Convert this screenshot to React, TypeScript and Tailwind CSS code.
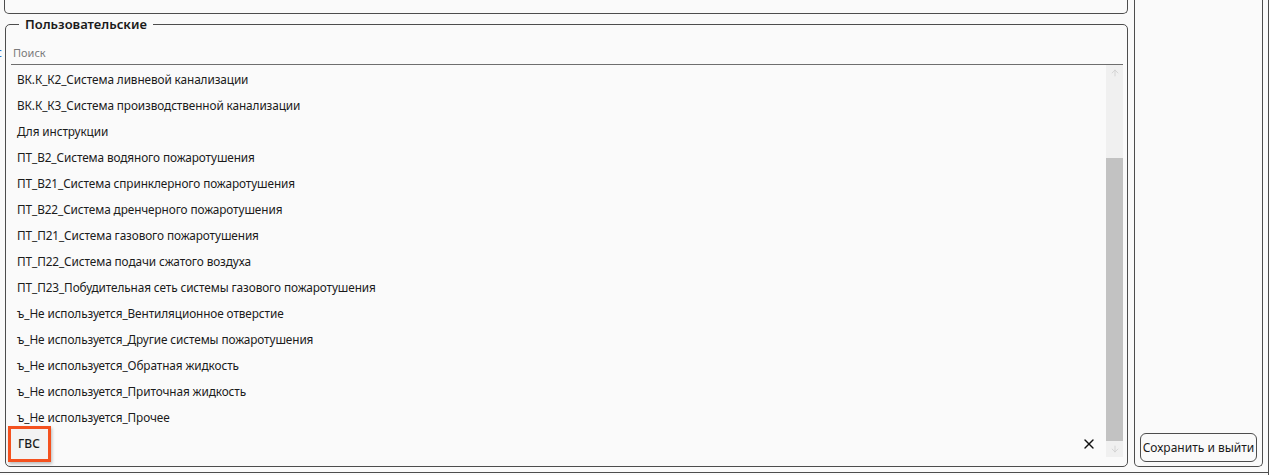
import React from 'react';
import { X, ArrowUp, ArrowDown } from 'lucide-react';

const items = [
  'ВК.К_К2_Система ливневой канализации',
  'ВК.К_К3_Система производственной канализации',
  'Для инструкции',
  'ПТ_В2_Система водяного пожаротушения',
  'ПТ_В21_Система спринклерного пожаротушения',
  'ПТ_В22_Система дренчерного пожаротушения',
  'ПТ_П21_Система газового пожаротушения',
  'ПТ_П22_Система подачи сжатого воздуха',
  'ПТ_П23_Побудительная сеть системы газового пожаротушения',
  'ъ_Не используется_Вентиляционное отверстие',
  'ъ_Не используется_Другие системы пожаротушения',
  'ъ_Не используется_Обратная жидкость',
  'ъ_Не используется_Приточная жидкость',
  'ъ_Не используется_Прочее',
];

const App = () => {
  return (
    <div className="relative flex h-[475px] w-[1269px] overflow-hidden bg-[#fafafa] text-[#1b1b1b] font-['Noto_Sans','Open_Sans',sans-serif]">
      {/* stray clipped glyph at left edge */}
      <span className="absolute left-[-4px] top-[44px] text-[12px] text-[#2a6fc9]">с</span>

      {/* Left column */}
      <div className="flex w-[1134px] flex-col pl-[4px] pr-[6px]">
        {/* end of previous panel */}
        <div className="h-[14px] shrink-0 rounded-b-[5px] border-x border-b border-[#4d4d4d]" />

        {/* Group box */}
        <fieldset className="mt-[3px] flex h-[450px] flex-col rounded-[5px] border border-[#4d4d4d] pl-[5px] pr-[4px] pb-[2px] ml-[1px]">
          <legend className="ml-[8px] px-[6px] text-[13px] font-semibold leading-[14px] text-[#1b1b1b]">
            Пользовательские
          </legend>

          {/* Search */}
          <div className="mt-[15px] flex h-[19px] items-start border-b border-[#6e6e6e] px-[2px] text-[11px] leading-[14px] text-[#7a7a7a]">
            Поиск
          </div>

          {/* List + scrollbar */}
          <div className="flex flex-1 min-h-0">
            <div className="flex flex-1 flex-col pt-[2px]">
              {items.map((t) => (
                <div key={t} className="flex h-[26px] shrink-0 items-center pl-[6px] text-[11.8px] tracking-[-0.1px]">
                  {t}
                </div>
              ))}
              <div className="flex h-[26px] shrink-0 items-center justify-between pr-[9px]">
                <div className="relative ml-[-3px] flex h-[36px] w-[43px] items-center border-[3px] border-[#f4511e] bg-[#f3f3f3] pl-[7px] text-[12px] font-medium shadow-[1px_2px_3px_rgba(0,0,0,0.25)]">
                  ГВС
                </div>
                <X size={16} strokeWidth={2} className="text-[#111]" />
              </div>
            </div>

            {/* Scrollbar */}
            <div className="flex w-[17px] flex-col bg-[#f0f0f0]">
              <div className="flex h-[16px] items-center justify-center">
                <ArrowUp size={10} strokeWidth={2} className="text-[#cfcfcf]" />
              </div>
              <div className="mt-[77px] flex-1 bg-[#c2c2c2]" />
              <div className="flex h-[16px] items-center justify-center">
                <ArrowDown size={10} strokeWidth={2} className="text-[#cfcfcf]" />
              </div>
            </div>
          </div>
        </fieldset>
        <div className="flex-1" />
      </div>

      {/* Right panel */}
      <div className="flex w-[129px] flex-col justify-end rounded-b-[5px] border-x border-b border-[#4d4d4d] mb-[8px] pb-[4px] px-[5px]">
        <button className="h-[29px] w-full rounded-[6px] border border-[#4d4d4d] bg-[#fafafa] text-[12px] text-[#1b1b1b]">
          Сохранить и выйти
        </button>
      </div>

      {/* window edges */}
      <div className="absolute right-0 top-0 h-full w-[1px] bg-[#4d4d4d]" />
      <div className="absolute bottom-[2px] left-0 h-[1px] w-full bg-[#4d4d4d]" />
    </div>
  );
};

export default App;
